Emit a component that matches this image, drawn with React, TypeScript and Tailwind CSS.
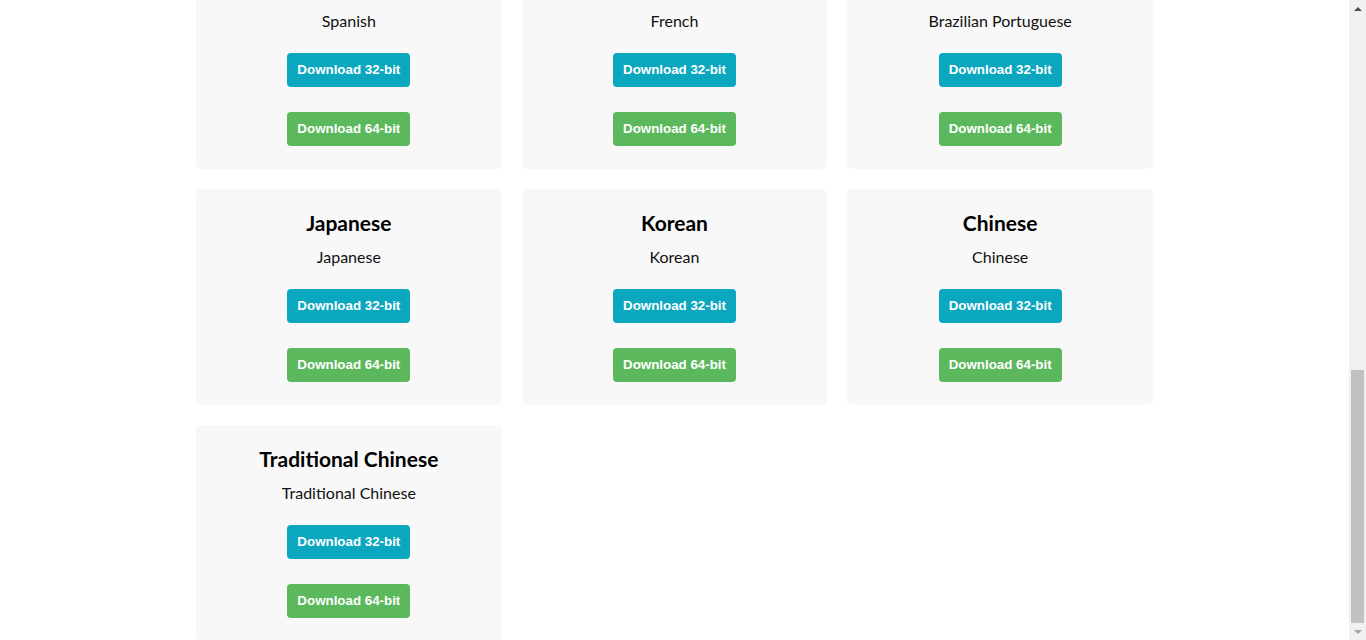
import React from 'react';

type Lang = { title: string; label: string };

const languages: Lang[] = [
  { title: 'English', label: 'English' },
  { title: 'German', label: 'German' },
  { title: 'Italian', label: 'Italian' },
  { title: 'Spanish', label: 'Spanish' },
  { title: 'French', label: 'French' },
  { title: 'Brazilian Portuguese', label: 'Brazilian Portuguese' },
  { title: 'Japanese', label: 'Japanese' },
  { title: 'Korean', label: 'Korean' },
  { title: 'Chinese', label: 'Chinese' },
  { title: 'Traditional Chinese', label: 'Traditional Chinese' },
];

function LanguageCard({ lang }: { lang: Lang }) {
  return (
    <div className="bg-[#f8f8f8] rounded-[5px] pt-[22px] pb-[23px] flex flex-col items-center text-center">
      <h3 className="text-[21px] leading-6 font-bold text-black font-['Lato',sans-serif]">{lang.title}</h3>
      <p className="mt-[10px] text-[16px] leading-6 text-[#111] font-['Lato',sans-serif]">{lang.label}</p>
      <button
        type="button"
        className="mt-5 bg-[#0ba7bf] text-white font-bold text-[13.333px] leading-[16px] py-[9px] px-[10px] rounded-[4px] font-['Liberation_Sans',Arial,sans-serif]"
      >
        Download 32-bit
      </button>
      <button
        type="button"
        className="mt-[25px] bg-[#5cb85c] text-white font-bold text-[13.333px] leading-[16px] py-[9px] px-[10px] rounded-[4px] font-['Liberation_Sans',Arial,sans-serif]"
      >
        Download 64-bit
      </button>
    </div>
  );
}

function Scrollbar() {
  return (
    <div className="w-[17px] h-full bg-[#f0f0f0] flex flex-col items-center shrink-0">
      <div className="h-[17px] w-full flex items-center justify-center">
        <div className="w-0 h-0 border-l-[4px] border-r-[4px] border-b-[4px] border-l-transparent border-r-transparent border-b-[#505050]" />
      </div>
      <div className="flex-1 w-full flex flex-col justify-end px-[2px]">
        <div className="h-[253px] w-full bg-[#c1c1c1]" />
      </div>
      <div className="h-[17px] w-full flex items-center justify-center">
        <div className="w-0 h-0 border-l-[4px] border-r-[4px] border-t-[4px] border-l-transparent border-r-transparent border-t-[#a3a3a3]" />
      </div>
    </div>
  );
}

export default function App() {
  return (
    <div className="h-[640px] w-full flex bg-white overflow-hidden">
      <main className="flex-1 h-full flex flex-col justify-end overflow-hidden">
        <div className="w-full max-w-[957px] mx-auto grid grid-cols-3 gap-5 -mb-px">
          {languages.map((lang) => (
            <LanguageCard key={lang.title} lang={lang} />
          ))}
        </div>
      </main>
      <Scrollbar />
    </div>
  );
}
